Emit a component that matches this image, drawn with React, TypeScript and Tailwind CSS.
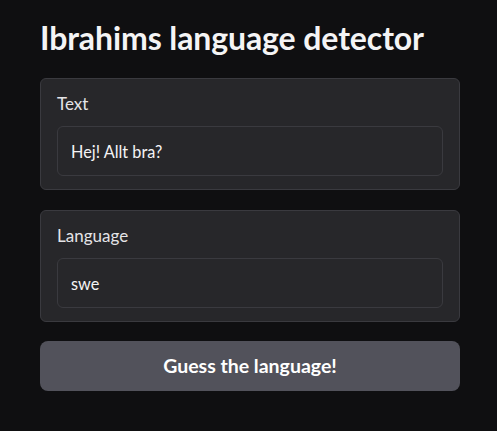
export default function App() {
  return (
    <div
      className="min-h-screen bg-[#0f0f11] pl-10 pr-[37px] pt-[18px] text-[#f4f4f5]"
      style={{ fontFamily: "Lato, 'Noto Sans', sans-serif" }}
    >
      <h1 className="text-[32px] font-bold leading-[40px] tracking-[-0.1px]">Ibrahims language detector</h1>

      <div className="mt-5 flex flex-col gap-5">
        <Field label="Text" value="Hej! Allt bra?" />
        <Field label="Language" value="swe" />

        <button className="-mt-px h-[50px] w-full rounded-lg bg-[#52525b] text-[19.5px] font-bold text-white">
          Guess the language!
        </button>
      </div>
    </div>
  );
}

function Field({ label, value }: { label: string; value: string }) {
  return (
    <div className="rounded-md border border-[#3a3a3f] bg-[#27272a] px-4 pb-[13px] pt-[15px]">
      <label className="block text-[17px] leading-5 text-[#e4e4e7]">{label}</label>
      <input
        readOnly
        value={value}
        className="mt-3 h-[50px] w-full rounded-md border border-[#3a3a3f] bg-[#27272a] px-[13px] text-[16.3px] text-[#f4f4f5] outline-none"
      />
    </div>
  );
}
